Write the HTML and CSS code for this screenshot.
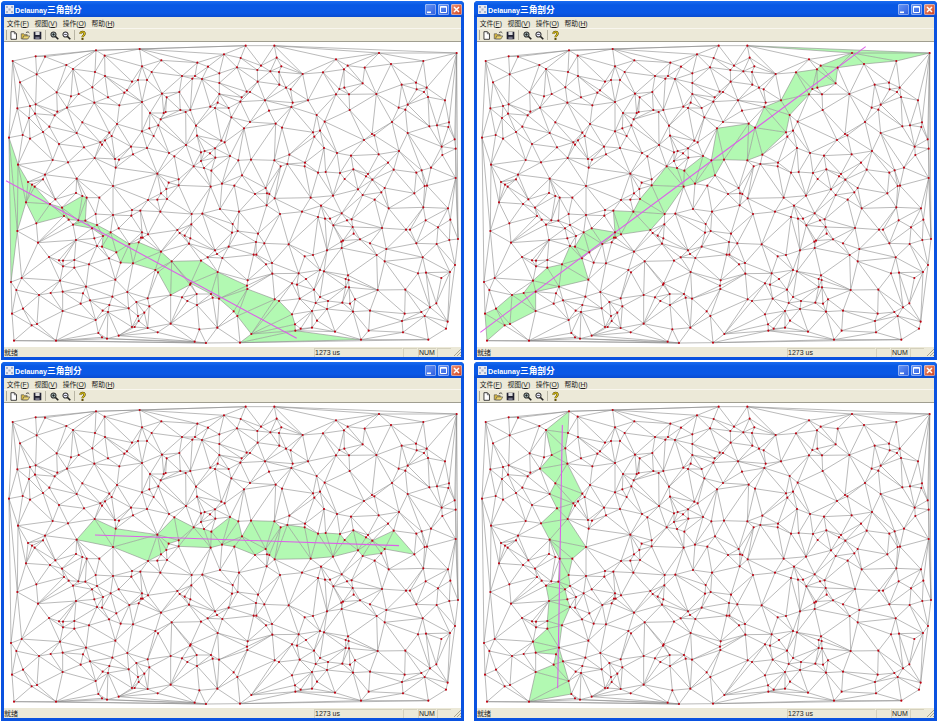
FILE: index.html
```html
<!DOCTYPE html>
<html lang="zh">
<head>
  <meta charset="UTF-8">
  <meta name="viewport" content="width=device-width, initial-scale=1.0">
  <title>Delaunay三角剖分</title>
  <link rel="stylesheet" href="styles.css">
</head>
<body>
  <div class="desktop" id="desktop"></div>

  <template id="window-tpl">
    <div class="window">
      <div class="titlebar">
        <svg class="app-icon" viewBox="0 0 9 9">
          <rect width="9" height="9" fill="#e8e8f0"/>
          <path d="M1 1h2v2H1zM6 1h2v2H6zM1 6h2v2H1zM6 6h2v2H6zM3.500 3.500h2v2h-2z" fill="#a8b4cc"/>
        </svg>
        <span class="title-text">Delaunay<span class="title-cjk">三角剖分</span></span>
        <span class="caption-btn"><svg viewBox="0 0 11 11"><rect x="2" y="7.500" width="4" height="1.600" fill="#fff"/></svg></span>
        <span class="caption-btn"><svg viewBox="0 0 11 11"><path d="M2.500 2.500h6v6h-6z M2.500 3.200h6" fill="none" stroke="#fff"/></svg></span>
        <span class="caption-btn close"><svg viewBox="0 0 11 11"><path d="M3 3l5 5M8 3l-5 5" stroke="#fff" stroke-width="1.500"/></svg></span>
      </div>
      <div class="menubar">
        <span>文件(<u>F</u>)</span>
        <span>视图(<u>V</u>)</span>
        <span>操作(<u>O</u>)</span>
        <span>帮助(<u>H</u>)</span>
      </div>
      <div class="toolbar">
        <span class="grip"></span>
        <svg class="tool" viewBox="-1 -1 13 13"><path d="M2.500 1h4l2.500 2.500V10h-6.500z" fill="#fff" stroke="#222"/><path d="M6.500 1v2.500H9" fill="none" stroke="#222" stroke-width=".7"/></svg>
        <svg class="tool" viewBox="-1 -1 13 13"><path d="M.5 9.500V3.500h3l1 1h3v5z" fill="#d8b840" stroke="#555" stroke-width=".8"/><path d="M2 9.500l1.500-3.500h7l-2 3.500z" fill="#f0d870" stroke="#555" stroke-width=".8"/><path d="M6 2.500c1-1.500 3-1.500 4 0" fill="none" stroke="#222"/></svg>
        <svg class="tool" viewBox="-1 -1 13 13"><path d="M1 1h9v9H1z" fill="#223"/><path d="M3 1.500h5v3.500H3z" fill="#ddd"/><path d="M3 7h5v3H3z" fill="#778"/></svg>
        <span class="sep"></span>
        <svg class="tool" viewBox="-1 -1 13 13"><circle cx="4.300" cy="4.300" r="3" fill="#9aa" stroke="#333" stroke-width="1.200"/><path d="M6.500 6.500l3.500 3.500" stroke="#222" stroke-width="1.800"/><path d="M2.800 4.300h3M4.300 2.800v3" stroke="#111" stroke-width=".8"/></svg>
        <svg class="tool" viewBox="-1 -1 13 13"><circle cx="4.300" cy="4.300" r="3" fill="#eef" stroke="#333" stroke-width="1.200"/><path d="M6.500 6.500l3.500 3.500" stroke="#222" stroke-width="1.800"/><path d="M2.800 4.300h3" stroke="#111" stroke-width=".8"/></svg>
        <span class="sep"></span>
        <svg class="tool help" viewBox="-1 -1 13 13"><path d="M3 3.500C3 .5 8 .5 8 3.500 8 5.500 5.500 5.500 5.500 7.500" fill="none" stroke="#554400" stroke-width="2.600"/><path d="M3 3.500C3 .5 8 .5 8 3.500 8 5.500 5.500 5.500 5.500 7.500" fill="none" stroke="#d8c020" stroke-width="1.300"/><rect x="4.300" y="8.500" width="2.400" height="2.200" fill="#554400"/></svg>
      </div>
      <svg class="canvas" viewBox="2 2 457 305"></svg>
      <div class="statusbar">
        <span class="status-text">就绪</span>
        <span class="pane pane-time">1273 us</span>
        <span class="pane pane-small"></span>
        <span class="pane pane-num">NUM</span>
        <span class="pane pane-small"></span>
        <svg class="size-grip" viewBox="0 0 8 8"><path d="M8 1L1 8M8 4L4 8M8 7L7 8" stroke="#a8a490"/></svg>
      </div>
    </div>
  </template>

  <script src="main.js"></script>
</body>
</html>
```

FILE: styles.css
```css
html, body {
  margin: 0;
  background-color: #fff;
}
.desktop {
  display: grid;
  grid-template-columns: 463px 463px;
  grid-auto-rows: 359px;
  column-gap: 10px;
  row-gap: 2px;
  padding: 1px 0 0 1px;
}
.window {
  display: flex;
  flex-direction: column;
  padding: 0 3px 3px;
  background-color: #0a52e0;
  border-radius: 4px 4px 0 0;
  font-family: "Liberation Sans", "Noto Sans CJK SC", sans-serif;
  overflow: hidden;
}
.titlebar {
  display: flex;
  align-items: center;
  height: 16px;
  flex: none;
  margin: 0 -3px;
  padding: 0 2px 0 4px;
  background: linear-gradient(#1a6cf0, #0858e4 25%, #0a58e6 75%, #0a4cd0);
  color: #fff;
}
.app-icon {
  width: 9px;
  height: 9px;
  margin-right: 1px;
}
.title-text {
  flex: 1;
  font-size: 7.200px;
  font-weight: bold;
}
.title-cjk {
  font-size: 8.700px;
}
.caption-btn {
  width: 11px;
  height: 11px;
  margin-left: 2px;
  border-radius: 2px;
  background: linear-gradient(135deg, #6a98f4, #2c5ce0);
  box-shadow: inset 0 0 0 .5px #cfdcf8;
}
.caption-btn svg {
  display: block;
}
.close {
  background: linear-gradient(135deg, #f09878, #d0401c);
}
.menubar {
  display: flex;
  align-items: center;
  gap: 5.500px;
  height: 11px;
  flex: none;
  padding-left: 2.700px;
  background-color: #ece9d8;
  font-size: 6.800px;
  color: #222;
}
.toolbar {
  display: flex;
  align-items: center;
  gap: 1px;
  height: 14px;
  flex: none;
  padding-left: 2px;
  background-color: #ece9d8;
  border-top: 1px solid #f8f6ee;
  border-bottom: 1px solid #a09e90;
  box-sizing: border-box;
}
.grip {
  width: 1px;
  height: 10px;
  background-color: #aaa896;
}
.tool {
  width: 11px;
  height: 11px;
}
.help {
  margin-left: -1.500px;
}
.sep {
  width: 1px;
  height: 10px;
  margin: 0 2px 0 1px;
  background-color: #b8b5a4;
}
.canvas {
  display: block;
  width: 457px;
  height: 305px;
  flex: none;
  background-color: #fff;
  filter: blur(.3px);
}
.mesh-edge {
  stroke: #8e8e8e;
  stroke-opacity: .72;
  stroke-width: .85;
}
.hit-tri {
  fill: #b2f9b2;
}
.mesh-point {
  fill: #c00010;
}
.probe {
  stroke: #dc60e8;
  stroke-width: 1.100;
}
.statusbar {
  display: flex;
  align-items: center;
  height: 10px;
  flex: none;
  background-color: #ece9d8;
  font-size: 7px;
  color: #222;
}
.status-text {
  width: 310px;
}
.pane {
  height: 8px;
  line-height: 8px;
  margin-right: 1px;
  border: 1px solid #d4d0bc;
  border-width: 1px 0 0 1px;
}
.pane-time {
  width: 87px;
}
.pane-small {
  width: 13px;
}
.pane-num {
  width: 17px;
}
.size-grip {
  width: 8px;
  height: 8px;
  margin-left: auto;
}
```

FILE: main.js
```js
// puntos del mapa, leidos a escala 3x por cuadrante
const quads = [
  { ox: 0, oy: 0, pts: [
    32,63, 101,49, 129,50, 282,31, 308,47, 413,27, 478,61, 586,68, 666,43, 618,80,
    193,75, 213,87, 104,103, 54,127, 279,96, 309,108, 420,79, 449,96, 390,125, 408,120, 435,120,
    540,108, 579,108, 571,116, 600,117, 652,100, 652,129,
    164,157, 207,169, 230,162, 271,142, 318,172, 367,158, 375,151, 277,188, 420,186, 352,196,
    480,161, 494,172, 532,156, 652,162, 647,188, 625,200, 639,204, 680,204,
    101,193, 84,198, 46,205, 99,221, 81,234, 166,215, 158,226, 195,203,
    444,219, 491,216, 485,219, 476,238, 535,210, 551,216, 565,210,
    241,247, 345,252, 142,260, 123,276, 62,285, 21,293, 84,296, 224,279, 322,278, 329,288, 309,301, 295,307, 300,314,
    420,274, 442,265, 469,256, 455,288, 582,257, 585,287, 688,232,
    171,312, 246,322, 387,320, 435,324, 552,315,
    658,302, 668,307, 639,325, 608,333, 597,337, 624,340, 597,363, 640,353,
    501,339, 517,349, 393,343, 278,354, 339,357, 351,359, 152,360, 198,367, 48,374,
    341,383, 575,379, 606,384, 628,392, 684,348,
    129,404, 123,418, 78,426, 90,434, 98,440, 466,401, 224,416, 333,438, 500,428, 530,418, 530,436,
    626,440, 660,431, 222,459, 477,460, 493,447
  ] },
  { ox: 690, oy: 0, pts: [
    41,17, 127,17, 26,54, 134,53, 15,82, 87,77, 148,79, 76,90, 115,94, 141,96, 212,102, 312,58, 347,77, 336,88,
    273,97, 398,83, 441,39, 477,72, 574,63, 674,39,
    77,125, 142,134, 162,143, 176,148, 392,130, 322,147, 337,143, 44,155, 54,156, 351,163, 312,163, 433,162,
    509,134, 552,128, 554,148, 584,143, 576,156, 29,172, 588,171, 639,181,
    25,185, 99,181, 182,188, 228,181, 178,201, 111,212, 353,210, 500,203, 527,194, 520,209,
    54,246, 254,225, 278,245, 480,246, 131,251, 36,265, 150,263, 264,272, 243,277, 247,290, 651,247, 649,261, 592,259, 615,256,
    420,282, 427,286, 396,300, 527,279, 668,298,
    276,324, 629,320, 671,326, 172,344, 315,339, 357,347, 440,343, 501,333, 631,345,
    57,359, 19,361, 127,361,
    146,379, 166,372, 219,368, 218,379, 468,368, 408,402, 597,383,
    258,398, 281,396, 324,399, 364,388, 485,389, 569,391, 553,398, 402,409,
    30,406, 338,417, 421,419, 671,414, 7,437,
    101,444, 105,460, 112,462, 69,462, 378,448, 458,444, 448,457, 547,460, 578,438, 585,437
  ] },
  { ox: 0, oy: 465, pts: [
    72,22, 144,27, 160,13, 180,38, 241,3, 254,8, 292,8, 438,15, 466,14, 495,12,
    415,47, 390,45, 475,50, 333,60, 281,57, 229,76, 186,63, 200,74, 213,89, 250,77, 103,85, 270,100, 285,90, 46,108,
    350,100, 388,62, 569,57, 654,42, 601,56, 568,88, 526,105, 533,114, 548,122, 565,130, 561,146,
    277,130, 303,123, 326,112, 420,112, 438,118, 417,128, 422,128, 222,135, 108,143, 382,147, 410,142,
    300,155, 285,153, 639,166, 680,155, 645,177, 661,189, 617,187,
    321,190, 343,172, 477,170, 141,186, 171,196, 183,197, 217,195, 183,214, 217,218, 261,208, 356,203, 393,205, 509,199, 597,197,
    460,225, 468,232, 647,231, 59,249, 174,257, 252,275, 340,254, 27,261, 566,265, 564,269,
    43,285, 146,294, 182,290, 111,300, 243,295, 376,291, 331,305, 264,316,
    506,300, 437,310, 540,307, 584,297, 556,318, 627,297, 632,308, 651,311,
    236,326, 322,330, 403,321, 442,334, 63,341, 182,348, 30,356, 585,330,
    380,340, 302,347, 318,351, 427,353, 408,363,
    89,391, 105,387, 281,375, 410,378, 506,386,
    390,396, 398,396, 437,399, 289,414, 300,427, 315,431, 350,422, 467,412, 592,403, 646,398,
    36,437, 162,437, 578,440, 612,444
  ] },
  { ox: 690, oy: 465, pts: [
    128,10, 236,8, 303,2, 392,0, 428,14, 470,40, 574,37, 648,40, 655,74,
    21,50, 104,31, 144,57, 210,50, 267,32, 329,55, 258,66, 279,71, 294,71, 345,76, 359,73, 304,91, 362,96, 450,99, 522,104, 534,104, 581,76, 618,97,
    2,87, 17,108, 78,116, 0,113, 365,116, 384,133, 652,135, 678,132,
    72,141, 97,145, 170,148, 333,137, 328,140, 414,145, 553,145, 614,147,
    329,159, 285,166, 463,162,
    65,179, 73,179, 218,184, 243,180, 434,180, 572,187, 458,199,
    102,208, 120,204, 669,210,
    264,225, 276,229, 121,236, 200,235, 348,241, 558,235, 582,233, 654,231, 628,249,
    47,256, 45,272, 222,252, 341,252, 350,255, 180,265, 195,269,
    46,282, 341,276, 351,277, 246,284, 437,285, 520,284,
    128,313, 141,318, 203,311, 264,306, 288,318, 369,313,
    251,324, 331,323, 354,326, 613,325,
    5,349, 240,348, 285,342, 363,350, 414,347, 594,337,
    16,363, 180,358, 518,356, 568,351, 578,363,
    255,377, 510,378, 647,380,
    189,388, 206,401, 240,398, 190,407, 642,401,
    58,417, 309,410, 410,407, 513,412,
    24,443, 387,434, 589,434
  ] }
];

// el segmento de prueba de cada ventana, misma escala 3x
const probes = [
  [12, 422, 884, 895],
  [16, 877, 1172, 20],
  [279, 402, 1191, 434],
  [262, 72, 248, 862]
];

const SVG_NS = "http://www.w3.org/2000/svg";

function loadPoints() {
  const points = [];
  quads.forEach(q => {
    for (let i = 0; i < q.pts.length; i += 2) {
      points.push({ x: (q.pts[i] + q.ox) / 3, y: (q.pts[i + 1] + q.oy) / 3 });
    }
  });
  return points;
}

function inCircle(p, a, b, c) {
  const ax = a.x - p.x, ay = a.y - p.y;
  const bx = b.x - p.x, by = b.y - p.y;
  const cx = c.x - p.x, cy = c.y - p.y;
  const det =
    (ax * ax + ay * ay) * (bx * cy - cx * by) -
    (bx * bx + by * by) * (ax * cy - cx * ay) +
    (cx * cx + cy * cy) * (ax * by - bx * ay);
  const orient = (b.x - a.x) * (c.y - a.y) - (b.y - a.y) * (c.x - a.x);
  return orient > 0 ? det > 0 : det < 0;
}

// Bowyer-Watson
function triangulate(points) {
  const big = 1e6;
  const all = points.concat([{ x: -big, y: -big }, { x: big * 2, y: -big }, { x: 0, y: big * 2 }]);
  const n = points.length;
  let tris = [[n, n + 1, n + 2]];

  points.forEach((p, i) => {
    const bad = [];
    const keep = [];
    tris.forEach(t => {
      (inCircle(p, all[t[0]], all[t[1]], all[t[2]]) ? bad : keep).push(t);
    });
    const edges = new Map();
    bad.forEach(t => {
      [[t[0], t[1]], [t[1], t[2]], [t[2], t[0]]].forEach(([a, b]) => {
        const key = Math.min(a, b) + "_" + Math.max(a, b);
        edges.set(key, edges.has(key) ? null : [a, b]);
      });
    });
    edges.forEach(e => {
      if (e) keep.push([e[0], e[1], i]);
    });
    tris = keep;
  });

  return tris.filter(t => t[0] < n && t[1] < n && t[2] < n);
}

function side(a, b, p) {
  return (b.x - a.x) * (p.y - a.y) - (b.y - a.y) * (p.x - a.x);
}

function segmentsCross(a, b, c, d) {
  return side(a, b, c) * side(a, b, d) < 0 && side(c, d, a) * side(c, d, b) < 0;
}

function triHit(tri, a, b) {
  for (let i = 0; i < 3; i++) {
    if (segmentsCross(a, b, tri[i], tri[(i + 1) % 3])) return true;
  }
  const s = [side(tri[0], tri[1], a), side(tri[1], tri[2], a), side(tri[2], tri[0], a)];
  return s.every(v => v > 0) || s.every(v => v < 0);
}

function el(name, cls, attrs) {
  const node = document.createElementNS(SVG_NS, name);
  node.setAttribute("class", cls);
  Object.keys(attrs).forEach(k => node.setAttribute(k, attrs[k]));
  return node;
}

function drawMesh(svg, points, tris, probe) {
  const a = { x: probe[0] / 3, y: probe[1] / 3 };
  const b = { x: probe[2] / 3, y: probe[3] / 3 };
  const seen = new Set();

  tris.forEach(t => {
    const tri = t.map(i => points[i]);
    if (triHit(tri, a, b)) {
      svg.appendChild(el("polygon", "hit-tri", { points: tri.map(p => p.x + "," + p.y).join(" ") }));
    }
  });
  tris.forEach(t => {
    [[t[0], t[1]], [t[1], t[2]], [t[2], t[0]]].forEach(([i, j]) => {
      const key = Math.min(i, j) + "_" + Math.max(i, j);
      if (seen.has(key)) return;
      seen.add(key);
      svg.appendChild(el("line", "mesh-edge", { x1: points[i].x, y1: points[i].y, x2: points[j].x, y2: points[j].y }));
    });
  });
  svg.appendChild(el("line", "probe", { x1: a.x, y1: a.y, x2: b.x, y2: b.y }));
  points.forEach(p => {
    svg.appendChild(el("circle", "mesh-point", { cx: p.x, cy: p.y, r: 1.05 }));
  });
}

const points = loadPoints();
const tris = triangulate(points);
const desktop = document.getElementById("desktop");
const tpl = document.getElementById("window-tpl");

probes.forEach(probe => {
  const win = tpl.content.cloneNode(true);
  drawMesh(win.querySelector(".canvas"), points, tris, probe);
  desktop.appendChild(win);
});
```
